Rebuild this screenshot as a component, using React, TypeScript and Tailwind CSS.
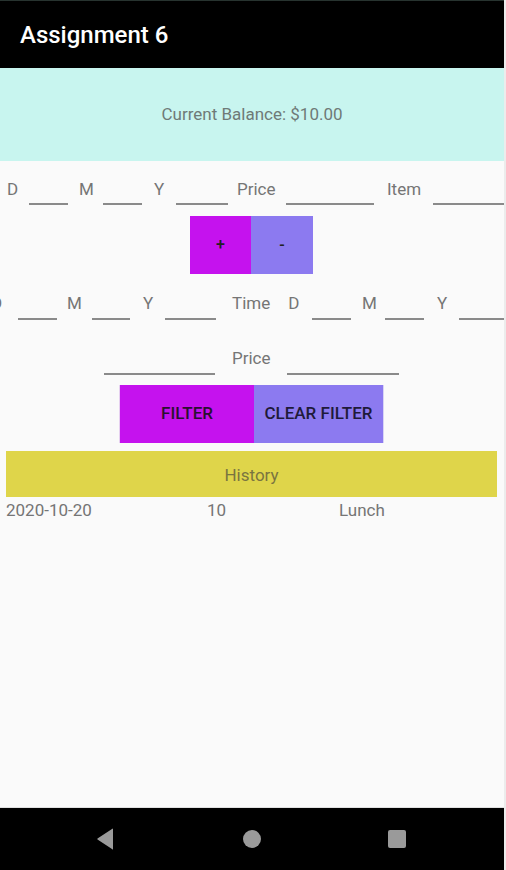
import React from "react";

const Line = ({ w }: { w: number }) => (
  <div className="self-end h-[2px] bg-[#8a8a8a]" style={{ width: w }} />
);

export default function App() {
  const font = { fontFamily: "Roboto, 'Noto Sans', sans-serif" };
  return (
    <div className="flex w-[506px] h-[870px] overflow-hidden bg-[#fafafa]" style={font}>
      <div className="w-[504px] flex flex-col h-full relative">
        <div className="h-[1px] bg-[#27332f]" />
        <div className="h-[67px] bg-black flex items-center pl-[20px]">
          <span className="text-white text-[24px] font-medium">Assignment 6</span>
        </div>
        <div className="h-[93px] bg-[#c8f5ef] flex items-center justify-center">
          <span className="text-[17px] text-[#6f7a77] pt-[1px]">Current Balance: $10.00</span>
        </div>

        {/* Row 1 */}
        <div className="flex h-[45px] text-[17px] text-[#757575]">
          <div className="w-[29px] pl-[7px] pt-[16px]">D</div>
          <div className="flex flex-col justify-end pb-[1px]"><Line w={39} /></div>
          <div className="w-[35px] pl-[11px] pt-[16px]">M</div>
          <div className="flex flex-col justify-end pb-[1px]"><Line w={39} /></div>
          <div className="w-[34px] pl-[12px] pt-[16px]">Y</div>
          <div className="flex flex-col justify-end pb-[1px]"><Line w={52} /></div>
          <div className="w-[58px] pl-[9px] pt-[16px]">Price</div>
          <div className="flex flex-col justify-end pb-[1px]"><Line w={88} /></div>
          <div className="w-[59px] pl-[13px] pt-[16px]">Item</div>
          <div className="flex flex-col justify-end pb-[1px]"><Line w={71} /></div>
        </div>

        {/* +/- */}
        <div className="flex justify-start pl-[190px] mt-[10px]">
          <div className="w-[61px] h-[58px] bg-[#c512ee] flex items-center justify-center text-[16px] text-[#222] font-medium">+</div>
          <div className="w-[62px] h-[58px] bg-[#8c7af0] flex items-center justify-center text-[16px] text-[#222] font-medium">-</div>
        </div>

        {/* Row 2 */}
        <div className="flex h-[47px] text-[17px] text-[#757575]">
          <div className="w-[18px] pt-[17px] overflow-hidden"><span className="block ml-[-9px]">D</span></div>
          <div className="flex flex-col justify-end pb-[1px]"><Line w={39} /></div>
          <div className="w-[35px] pl-[10px] pt-[17px]">M</div>
          <div className="flex flex-col justify-end pb-[1px]"><Line w={38} /></div>
          <div className="w-[35px] pl-[13px] pt-[17px]">Y</div>
          <div className="flex flex-col justify-end pb-[1px]"><Line w={51} /></div>
          <div className="w-[96px] pl-[16px] pt-[17px] flex">
            <span>Time</span>
            <span className="ml-[18px]">D</span>
          </div>
          <div className="flex flex-col justify-end pb-[1px]"><Line w={39} /></div>
          <div className="w-[34px] pl-[11px] pt-[17px]">M</div>
          <div className="flex flex-col justify-end pb-[1px]"><Line w={39} /></div>
          <div className="w-[35px] pl-[13px] pt-[17px]">Y</div>
          <div className="flex flex-col justify-end pb-[1px]"><Line w={45} /></div>
        </div>

        {/* Row 3 */}
        <div className="flex h-[55px] text-[17px] text-[#757575] pl-[104px]">
          <div className="flex flex-col justify-end pb-[1px]"><Line w={111} /></div>
          <div className="w-[72px] pl-[17px] pt-[25px]">Price</div>
          <div className="flex flex-col justify-end pb-[1px]"><Line w={112} /></div>
        </div>

        {/* Filter buttons */}
        <div className="flex pl-[119px] mt-[9px]">
          <div className="w-[135px] h-[58px] bg-[#c512ee] flex items-center justify-center text-[17px] text-[#2a1030] font-medium border-l border-[#e6d0f0]">FILTER</div>
          <div className="w-[130px] h-[58px] bg-[#8c7af0] flex items-center justify-center text-[17px] text-[#1f1a3a] font-medium border-r border-[#d8d4f5]">CLEAR FILTER</div>
        </div>

        {/* History */}
        <div className="ml-[6px] mt-[8px] w-[491px] h-[46px] bg-[#dfd54a] flex items-center justify-center text-[17px] text-[#7a7440] pt-[3px]">History</div>

        <div className="flex text-[17px] text-[#757575] h-[24px] items-center mt-[2px]">
          <span className="w-[207px] pl-[6px]">2020-10-20</span>
          <span className="w-[132px]">10</span>
          <span>Lunch</span>
        </div>

        <div className="flex-1" />
        <div className="h-[1px] bg-[#e0e0e0]" />
        <div className="h-[62px] bg-black flex items-center">
          <div className="w-[504px] flex items-center">
            <svg width="18" height="22" viewBox="0 0 18 22" className="ml-[96px]">
              <path d="M17 1 L17 21 Q17 22 16 21 L1.5 11.5 Q1 11 1.5 10.5 L16 1 Q17 0 17 1Z" fill="#9a9a9a" />
            </svg>
            <div className="ml-[129px] w-[18px] h-[18px] rounded-full bg-[#9a9a9a]" />
            <div className="ml-[127px] w-[18px] h-[18px] rounded-[2px] bg-[#9a9a9a]" />
          </div>
        </div>
      </div>
      <div className="w-[2px] h-full bg-[#ececec]" />
    </div>
  );
}
